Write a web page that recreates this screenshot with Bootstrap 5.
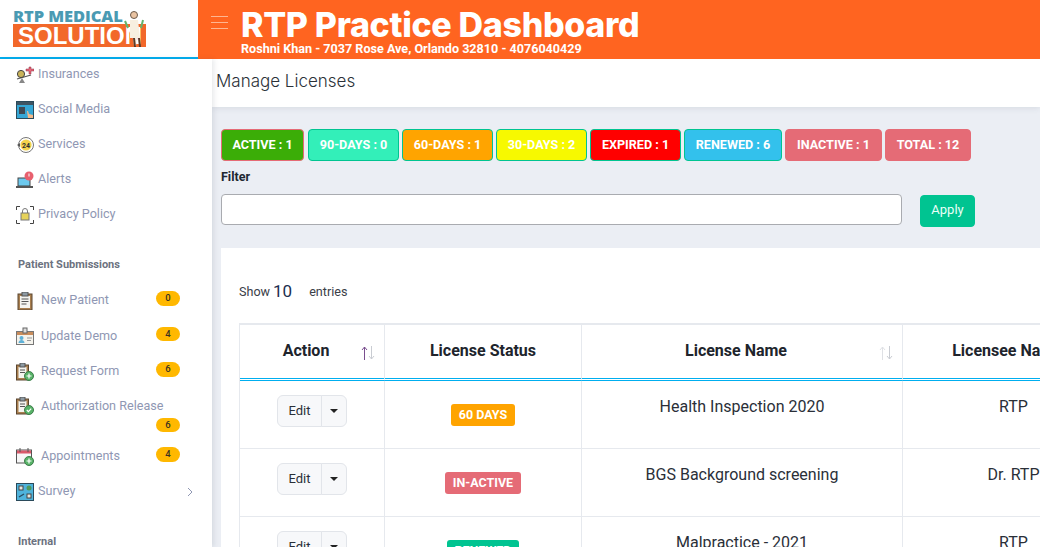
<!DOCTYPE html>
<html lang="en">
<head>
    <meta charset="UTF-8">
    <meta name="viewport" content="width=device-width, initial-scale=1.0">
    <title>RTP Practice Dashboard</title>
    <link rel="stylesheet" href="https://cdn.jsdelivr.net/npm/bootstrap@5.3.0/dist/css/bootstrap.min.css">
    <style>
        html, body { height: 547px; overflow: hidden; }
        body { font-family: Roboto, "Liberation Sans", sans-serif; color: #212631; background: #fff; }

        /* top bar */
        .top-bar { height: 59px; }
        .logo-box { width: 198px; flex: none; border-bottom: 2px solid #00aeef; padding: 8px 0 0 13px; }
        .logo-top { font: 800 16.5px/16px "Open Sans", sans-serif; color: #4a9ab3; letter-spacing: -.1px; white-space: nowrap; }
        .logo-bottom { width: 133px; height: 23px; background: #f2682a; color: #fff; font: 700 24px/23px "Liberation Sans", sans-serif; padding-left: 5px; white-space: nowrap; }
        .logo-man { position: absolute; left: 122px; top: 5px; }
        .orange-bar { background: #ff6420; color: #fff; padding-left: 13px; }
        .burger { width: 17px; margin-right: 13px; }
        .burger i { display: block; height: 1px; background: #ffb591; margin-bottom: 5px; }
        .dash-title { font: 800 34px/34px Inter, sans-serif; letter-spacing: -.33px; padding-top: 8px; white-space: nowrap; }
        .dash-sub { font-size: 12.6px; font-weight: 700; line-height: 13px; white-space: nowrap; }

        /* sidebar */
        .side-col { width: 212px; flex: none; background: #fff; height: 488px; overflow: hidden; box-shadow: 2px 0 5px rgba(60,70,90,.12); position: relative; z-index: 2; }
        .side-list { margin-top: -2px; padding: 0 0 0 16px; }
        .side-link { display: flex; align-items: center; height: 35px; font-size: 12.6px; color: #8f97b3; text-decoration: none; width: 164px; flex-wrap: wrap; }
        .side-link svg { flex: none; margin-right: 4px; }
        .side-link.wide svg { margin-right: 7px; }
        .side-pill { background: #ffb800; color: #3a3320; font-size: 9.5px; font-weight: 500; width: 24px; padding: 2px 0 3px; margin-left: auto; margin-top: -4px; }
        .side-head { font-size: 11px; font-weight: 700; color: #6c7280; margin: 25px 0 11px 2px; line-height: 15px; }
        .side-demo { height: 36px; }
        .side-tall { height: 50px; align-content: flex-start; padding-top: 8px; }
        .side-tall .side-pill { margin-top: 2px; }
        .side-tail { margin-top: 25px; }
        .chev { margin-left: auto; margin-right: -13px !important; }

        /* main */
        .main-col { min-width: 0; background: #ebeef4; height: 488px; overflow: hidden; }
        .title-bar { height: 48px; background: #fff; padding: 9px 0 0 4px; font: 300 17px/26px Inter, sans-serif; color: #2b3138; box-shadow: 0 1px 6px rgba(60,70,90,.12); }
        .count-wrap { padding: 22px 0 0 9px; }
        .count-row { gap: 3px; }
        .count-btn { height: 32px; padding: 0; font-size: 12.6px; font-weight: 700; line-height: 28px; color: #fff; border: 1px solid #00c491; border-radius: 4px; white-space: nowrap; }
        .c-active { background: #3bad07; border-color: #e56b76; width: 83px; margin-right: 1px; }
        .c-90 { background: #33efb9; width: 91px; }
        .c-60 { background: #ffa400; width: 91px; }
        .c-30 { background: #f7f900; width: 91px; }
        .c-exp { background: #ff0000; width: 91px; }
        .c-new { background: #33c1ec; width: 98px; }
        .c-in { background: #e56b76; border-color: #e56b76; width: 97px; }
        .c-total { background: #e56b76; border-color: #e56b76; width: 86px; }
        .filter-label { font-size: 12.5px; font-weight: 700; line-height: 15px; margin: 8px 0 10px; }
        .filter-input { width: 681px; height: 31px; border: 1px solid #a9abb0; border-radius: 4px; background: #fff; padding: 0; }
        .apply-btn { width: 55px; height: 32px; margin: 1px 0 0 18px; padding: 0 0 2px; background: #00c491; border-color: #00c491; color: #eafff8; font-size: 13px; border-radius: 4px; }
        .list-panel { background: #fff; margin-top: 21px; padding: 0 0 0 18px; height: 300px; overflow: hidden; }
        .len-row { height: 75px; padding-top: 13px; font-size: 12.6px; color: #3a4048; }
        .len-num { font-size: 17px; color: #1c2f4f; margin: 0 17px 0 3px; }
        .lic-table { table-layout: fixed; width: 885px; border-collapse: separate; border-spacing: 0; border-top: 2px solid #e6e9ee; border-left: 1px solid #e6e9ee; margin: 0; font-size: 16px; color: #2a2f38; }
        .lic-table th, .lic-table td { border: 0; border-right: 1px solid #e6e9ee; border-bottom: 1px solid #e6e9ee; text-align: center; }
        .lic-table th { height: 56px; vertical-align: middle; font-weight: 700; font-size: 16px; color: #20242c; border-bottom: 3px double #00aeef; position: relative; padding: 0 0 1px; white-space: nowrap; }
        .lic-table th.sort-col { padding-right: 12px; }
        .lic-table td { height: 68px; padding: 14px 0 0; vertical-align: top; line-height: 24px; }
        .sort-mark { position: absolute; right: 8px; top: 20px; }
        .act-btn { background: #f7f8fa; border-color: #e2e5ea; color: #2a2f38; font-size: 13px; padding: 0; height: 32px; line-height: 30px; }
        .act-edit { width: 45px; }
        .act-more { width: 26px; }
        .act-more::after { margin: 0; border-top-width: 4px; border-left-width: 4px; border-right-width: 4px; vertical-align: 2px; color: #222; }
        .state-tag { display: inline-block; color: #fff; font-size: 12.5px; font-weight: 700; line-height: 22px; padding: 0 8px; border-radius: 3px; margin-top: 9px; }
        .tag-60 { background: #ffa400; }
        .tag-in { background: #e56b76; }
        .tag-new { background: #00c491; }
    </style>
</head>
<body>
    <div class="d-flex top-bar">
        <div class="logo-box position-relative">
            <div class="logo-top">RTP MEDICAL</div>
            <div class="logo-bottom">SOLUTION</div>
            <svg class="logo-man" width="24" height="43" viewBox="0 0 24 43">
                <path d="M3 16l3 7M21 15l-2 8" stroke="#63b56d" stroke-width="2" fill="none"/>
                <circle cx="12" cy="10" r="3.5" fill="#e9c3a2" stroke="#6b5a4a"/>
                <path d="M8 15h8l2 18h-3l-1 8h-2l-1-8H8z" fill="#f7efe0"/>
                <path d="M12 33l1 9M17 33l1 9" stroke="#5a3a28" stroke-width="2"/>
            </svg>
        </div>
        <div class="orange-bar flex-grow-1 d-flex">
            <div class="burger pt-3"><i></i><i></i><i></i></div>
            <div>
                <div class="dash-title">RTP Practice Dashboard</div>
                <div class="dash-sub">Roshni Khan - 7037 Rose Ave, Orlando 32810 - 4076040429</div>
            </div>
        </div>
    </div>

    <div class="d-flex">
        <div class="side-col">
            <div class="side-list">
                <a class="side-link" href="#">
                    <svg width="18" height="18" viewBox="0 0 18 18"><path d="M1 13l14-4" stroke="#555" stroke-width="1.2"/><circle cx="5" cy="8" r="3.6" fill="#c9b35a" stroke="#444"/><path d="M10 3h3V1h2v2h3v2h-3v3h-2V5h-3z" fill="#e8667a" stroke="#8a3040" stroke-width=".5"/><path d="M6 12l-3 5h6z" fill="#888"/></svg>
                    Insurances
                </a>
                <a class="side-link" href="#">
                    <svg width="18" height="18" viewBox="0 0 18 18"><rect x=".5" y=".5" width="17" height="17" fill="#35a7d6" stroke="#2b4a5a"/><rect x="1" y="1" width="16" height="3" fill="#3f5563"/><rect x="3" y="6" width="6" height="7" fill="#3f4a55"/><path d="M11 10l1 7h5v-3l-4-1-1-3z" fill="#f3b98a"/></svg>
                    Social Media
                </a>
                <a class="side-link" href="#">
                    <svg width="18" height="18" viewBox="0 0 18 18"><circle cx="10" cy="9" r="7.5" fill="#fff" stroke="#777"/><circle cx="10" cy="9" r="5.6" fill="#f4d44d"/><path d="M1 9l3-2v4z" fill="#555"/><text x="10" y="11.5" font-size="7" font-weight="700" text-anchor="middle" fill="#333">24</text></svg>
                    Services
                </a>
                <a class="side-link" href="#">
                    <svg width="18" height="18" viewBox="0 0 18 18"><rect x="2" y="7" width="12" height="8" fill="#6cc9ee" stroke="#444"/><rect x="0" y="15" width="17" height="2" fill="#555"/><circle cx="13" cy="5" r="4.5" fill="#e8606e"/><rect x="12.5" y="2.5" width="1" height="3" fill="#fff"/></svg>
                    Alerts
                </a>
                <a class="side-link" href="#">
                    <svg width="18" height="18" viewBox="0 0 18 18"><path d="M.5 4V.5H4M14 .5h3.500V4M.5 14v3.500H4M14 17.500h3.500V14" stroke="#444" fill="none"/><path d="M6.500 7V5a2.500 2.500 0 015 0v2" stroke="#777" fill="none"/><rect x="5" y="7" width="8" height="7" fill="#e6d25a" stroke="#777"/></svg>
                    Privacy Policy
                </a>

                <div class="side-head">Patient Submissions</div>

                <a class="side-link wide" href="#">
                    <svg width="18" height="18" viewBox="0 0 18 18"><rect x="2" y="2" width="14" height="16" fill="#a97f4f" stroke="#5b4630"/><rect x="4" y="4" width="10" height="12" fill="#f5f5f0"/><rect x="6" y="0" width="6" height="4" fill="#8d9aa3" stroke="#555"/><path d="M5.500 7h7M5.500 9.500h7M5.500 12h5" stroke="#555"/></svg>
                    New Patient
                    <span class="badge rounded-pill side-pill">0</span>
                </a>
                <a class="side-link wide side-demo" href="#">
                    <svg width="18" height="18" viewBox="0 0 18 18"><rect x=".5" y="4.500" width="17" height="13" fill="#f5f3ec" stroke="#777"/><rect x="1" y="5" width="16" height="3" fill="#c98d5c"/><rect x="7" y="1" width="4" height="5" fill="#ddd" stroke="#666"/><circle cx="5.500" cy="11" r="2" fill="#5fb1d8"/><path d="M2.500 16c0-4 6-4 6 0z" fill="#5fb1d8"/><path d="M11 11h5M11 13.500h4" stroke="#999"/></svg>
                    Update Demo
                    <span class="badge rounded-pill side-pill">4</span>
                </a>
                <a class="side-link wide" href="#">
                    <svg width="18" height="18" viewBox="0 0 18 18"><rect x=".5" y="2" width="12" height="15" fill="#a97f4f" stroke="#5b4630"/><rect x="2.500" y="4" width="8" height="11" fill="#f5f5f0"/><rect x="4" y="0" width="5" height="4" fill="#8d9aa3" stroke="#555"/><path d="M4 7h5M4 9.500h5" stroke="#555"/><circle cx="13" cy="13" r="4.500" fill="#58b368" stroke="#3c7d4a"/><path d="M13 10.500v5M10.500 13h5" stroke="#fff" stroke-width="1.200"/></svg>
                    Request Form
                    <span class="badge rounded-pill side-pill">6</span>
                </a>
                <a class="side-link wide side-tall" href="#">
                    <svg width="18" height="18" viewBox="0 0 18 18"><rect x=".5" y="2" width="12" height="15" fill="#a97f4f" stroke="#5b4630"/><rect x="2.500" y="4" width="8" height="11" fill="#f5f5f0"/><rect x="4" y="0" width="5" height="4" fill="#8d9aa3" stroke="#555"/><path d="M4 7h5M4 9.500h5" stroke="#555"/><circle cx="13" cy="13" r="4.500" fill="#58b368" stroke="#3c7d4a"/><path d="M10.800 13l1.600 1.700 2.800-3" stroke="#fff" stroke-width="1.200" fill="none"/></svg>
                    Authorization Release
                    <span class="badge rounded-pill side-pill">6</span>
                </a>
                <a class="side-link wide" href="#">
                    <svg width="18" height="18" viewBox="0 0 18 18"><rect x=".5" y="2" width="15" height="13" fill="#f7f7f7" stroke="#555"/><rect x="1" y="2.500" width="14" height="3" fill="#d9596a"/><path d="M4 0v4M12 0v4" stroke="#555"/><circle cx="13" cy="13" r="4.500" fill="#58b368" stroke="#3c7d4a"/><path d="M13 10.500v5M10.500 13h5" stroke="#fff" stroke-width="1.200"/></svg>
                    Appointments
                    <span class="badge rounded-pill side-pill">4</span>
                </a>
                <a class="side-link" href="#">
                    <svg width="18" height="18" viewBox="0 0 18 18"><rect x=".5" y=".5" width="17" height="17" fill="#4fb3dc" stroke="#2b4a5a"/><rect x="3" y="3" width="4" height="4" fill="#e8e8e0" stroke="#444"/><circle cx="13" cy="5" r="2.500" fill="#4f9a5a"/><rect x="11" y="11" width="4" height="4" fill="#e8e8e0" stroke="#444"/><path d="M3 14l5-3" stroke="#274a60" stroke-width="1.400"/></svg>
                    Survey
                    <svg class="chev" width="6" height="10" viewBox="0 0 6 10"><path d="M1 1l4 4-4 4" stroke="#8f97b3" fill="none"/></svg>
                </a>

                <div class="side-head side-tail">Internal</div>
            </div>
        </div>

        <div class="main-col flex-grow-1">
            <div class="title-bar">Manage Licenses</div>
            <div class="count-wrap">
                <div class="d-flex count-row">
                    <button class="btn count-btn c-active">ACTIVE : 1</button>
                    <button class="btn count-btn c-90">90-DAYS : 0</button>
                    <button class="btn count-btn c-60">60-DAYS : 1</button>
                    <button class="btn count-btn c-30">30-DAYS : 2</button>
                    <button class="btn count-btn c-exp">EXPIRED : 1</button>
                    <button class="btn count-btn c-new">RENEWED : 6</button>
                    <button class="btn count-btn c-in">INACTIVE : 1</button>
                    <button class="btn count-btn c-total">TOTAL : 12</button>
                </div>
                <div class="filter-label">Filter</div>
                <div class="d-flex align-items-start">
                    <input class="filter-input" type="text">
                    <button class="btn apply-btn">Apply</button>
                </div>
                <div class="list-panel">
                    <div class="len-row d-flex align-items-center">
                        Show <span class="len-num">10</span> entries
                    </div>
                    <table class="table lic-table">
                        <colgroup><col style="width:145px"><col style="width:197px"><col style="width:321px"><col style="width:222px"></colgroup>
                        <thead>
                            <tr>
                                <th class="sort-col">Action
                                    <svg class="sort-mark" width="16" height="16" viewBox="0 0 16 16"><path d="M4.500 15V2M2 5l2.500-3L7 5" stroke="#7a4f8f" fill="none"/><path d="M11.500 1v13M9 11l2.500 3 2.500-3" stroke="#c9ccd2" fill="none"/></svg>
                                </th>
                                <th>License Status</th>
                                <th class="sort-col">License Name
                                    <svg class="sort-mark" width="16" height="16" viewBox="0 0 16 16"><path d="M4.500 15V2M2 5l2.500-3L7 5" stroke="#dfe1e5" fill="none"/><path d="M11.500 1v13M9 11l2.500 3 2.500-3" stroke="#c9ccd2" fill="none"/></svg>
                                </th>
                                <th class="sort-col">Licensee Name</th>
                            </tr>
                        </thead>
                        <tbody>
                            <tr>
                                <td><div class="btn-group"><button class="btn act-btn act-edit">Edit</button><button class="btn act-btn act-more dropdown-toggle"></button></div></td>
                                <td><span class="state-tag tag-60">60 DAYS</span></td>
                                <td>Health Inspection 2020</td>
                                <td>RTP</td>
                            </tr>
                            <tr>
                                <td><div class="btn-group"><button class="btn act-btn act-edit">Edit</button><button class="btn act-btn act-more dropdown-toggle"></button></div></td>
                                <td><span class="state-tag tag-in">IN-ACTIVE</span></td>
                                <td>BGS Background screening</td>
                                <td>Dr. RTP</td>
                            </tr>
                            <tr>
                                <td><div class="btn-group"><button class="btn act-btn act-edit">Edit</button><button class="btn act-btn act-more dropdown-toggle"></button></div></td>
                                <td><span class="state-tag tag-new">RENEWED</span></td>
                                <td>Malpractice - 2021</td>
                                <td>RTP</td>
                            </tr>
                        </tbody>
                    </table>
                </div>
            </div>
        </div>
    </div>
    <script src="https://cdn.jsdelivr.net/npm/bootstrap@5.3.0/dist/js/bootstrap.bundle.min.js"></script>
</body>
</html>
